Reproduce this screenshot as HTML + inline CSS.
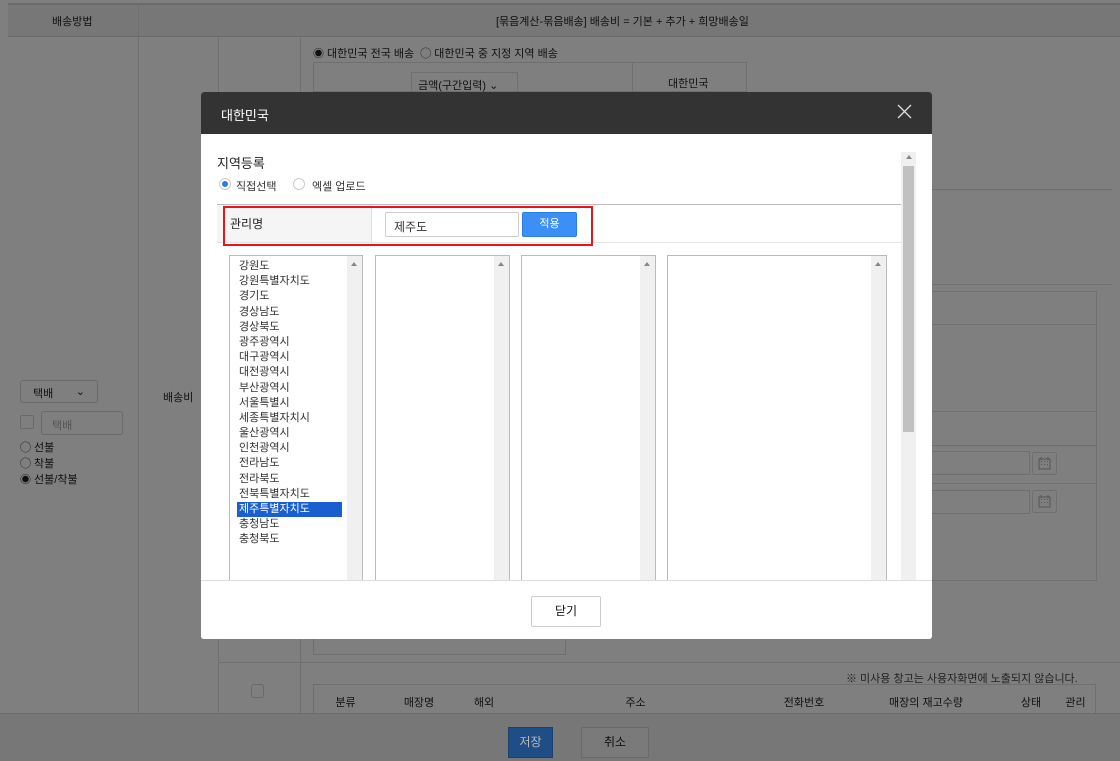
<!DOCTYPE html><html><head><meta charset="utf-8"><style>
*{box-sizing:border-box}body{margin:0;width:1120px;height:761px;overflow:hidden;background:#7f7f7f;font-family:"Liberation Sans","Noto Sans CJK KR",sans-serif;font-size:12px;color:#111;position:relative}
.a{position:absolute}
.hl{position:absolute;height:1px;background:#6f6f6f}.vl{position:absolute;width:1px;background:#6f6f6f}
.list{position:absolute;top:255px;height:330px;border:1px solid #bbb;background:#fff}
.list .sb{position:absolute;right:0;top:0;bottom:0;width:15px;background:#f0f0f0}
.list .sb:after{content:"";position:absolute;left:4px;top:6px;border:3px solid transparent;border-bottom:4px solid #888;border-top:0}
.items div{height:15.2px;line-height:15px;padding-left:2px;font-size:11px;color:#333}
</style></head><body>
<div class="a" style="left:8px;top:3px;width:1112px;height:34px;background:#777;border-top:2px solid #6a6a6a;border-bottom:1px solid #6a6a6a"></div>
<div class="a" style="left:52px;top:13px;font-size:11px">배송방법</div>
<div class="a" style="left:496px;top:13px;font-size:11px">[묶음계산-묶음배송] 배송비 = 기본 + 추가 + 희망배송일</div>
<div class="vl" style="left:138px;top:3px;height:710px"></div>
<div class="vl" style="left:218px;top:37px;height:676px"></div>
<div class="vl" style="left:300px;top:37px;height:676px"></div>
<div class="a" style="left:313px;top:45px;font-size:11px">◉ 대한민국 전국 배송 &nbsp;◯ 대한민국 중 지정 지역 배송</div>
<div class="a" style="left:313px;top:62px;width:434px;height:30px;border:1px solid #6f6f6f"></div>
<div class="vl" style="left:632px;top:62px;height:30px"></div>
<div class="a" style="left:411px;top:72px;width:107px;height:20px;border:1px solid #6f6f6f;font-size:11px;padding:4px 6px">금액(구간입력) ⌄</div>
<div class="a" style="left:668px;top:75px;font-size:11px">대한민국</div>
<div class="hl" style="left:932px;top:189px;width:180px"></div>
<div class="hl" style="left:932px;top:284px;width:180px"></div>
<div class="a" style="left:932px;top:291px;width:165px;height:290px;border:1px solid #6f6f6f;border-left:0"></div>
<div class="hl" style="left:932px;top:324px;width:165px"></div>
<div class="hl" style="left:932px;top:411px;width:165px"></div>
<div class="hl" style="left:932px;top:445px;width:165px"></div>
<div class="hl" style="left:932px;top:483px;width:165px"></div>
<div class="a" style="left:932px;top:451px;width:98px;height:24px;border:1px solid #6f6f6f;border-left:0"></div>
<svg class="a" style="left:1032px;top:452px" width="26" height="24"><rect x=".5" y=".5" width="24" height="22" rx="2" fill="none" stroke="#6f6f6f"/><rect x="7" y="7" width="11" height="10" fill="none" stroke="#555"/><path d="M9 9.5h1M12 9.5h1M15 9.5h1M9 12.5h1M12 12.5h1M15 12.5h1M9 5v3M16 5v3" stroke="#555"/></svg>
<div class="a" style="left:932px;top:490px;width:98px;height:24px;border:1px solid #6f6f6f;border-left:0"></div>
<svg class="a" style="left:1032px;top:490px" width="26" height="24"><rect x=".5" y=".5" width="24" height="22" rx="2" fill="none" stroke="#6f6f6f"/><rect x="7" y="7" width="11" height="10" fill="none" stroke="#555"/><path d="M9 9.5h1M12 9.5h1M15 9.5h1M9 12.5h1M12 12.5h1M15 12.5h1M9 5v3M16 5v3" stroke="#555"/></svg>
<div class="a" style="left:20px;top:380px;width:78px;height:23px;border:1px solid #6a6a6a;border-radius:3px;padding:4px 12px;font-size:11px">택배 <span style="float:right">⌄</span></div>
<div class="a" style="left:20px;top:415px;width:14px;height:14px;border:1px solid #6a6a6a;border-radius:2px"></div>
<div class="a" style="left:41px;top:411px;width:82px;height:24px;border:1px solid #6a6a6a;border-radius:3px;padding:5px 10px;font-size:11px;color:#555">택배</div>
<div class="a" style="left:20px;top:440px;font-size:11px;line-height:16px">◯ 선불<br>◯ 착불<br>◉ 선불/착불</div>
<div class="a" style="left:163px;top:389px;font-size:11px">배송비</div>
<div class="a" style="left:313px;top:620px;width:253px;height:35px;border:1px solid #6f6f6f;border-top:0"></div>
<div class="hl" style="left:218px;top:662px;width:902px"></div>
<div class="a" style="left:846px;top:670px;font-size:11px;color:#222">※ 미사용 창고는 사용자화면에 노출되지 않습니다.</div>
<div class="a" style="left:313px;top:684px;width:783px;height:30px;border:1px solid #6f6f6f"></div>
<div class="a" style="left:313px;top:694px;width:783px;font-size:11px;display:flex"><span style="width:65px;text-align:center">분류</span><span style="width:82px;text-align:center">매장명</span><span style="width:48px;text-align:center">해외</span><span style="width:255px;text-align:center">주소</span><span style="width:82px;text-align:center">전화번호</span><span style="width:162px;text-align:center">매장의 재고수량</span><span style="width:48px;text-align:center">상태</span><span style="width:41px;text-align:center">관리</span></div>
<div class="a" style="left:251px;top:684px;width:13px;height:14px;border:1px solid #6a6a6a;border-radius:3px"></div>
<div class="a" style="left:0;top:713px;width:1120px;height:48px;background:#777;border-top:1px solid #6a6a6a"></div>
<div class="a" style="left:508px;top:727px;width:45px;height:31px;background:#1e4e85;border:1px solid #184070;color:#bbb;text-align:center;line-height:29px;font-size:12px">저장</div>
<div class="a" style="left:581px;top:727px;width:68px;height:31px;background:#7a7a7a;border:1px solid #6a6a6a;text-align:center;line-height:29px;font-size:12px">취소</div>

<div class="a" style="left:201px;top:92px;width:731px;height:547px;background:#fff;border-radius:3px;overflow:hidden">
 <div class="a" style="left:0;top:0;width:731px;height:42px;background:#333;color:#fff;font-size:13px;padding:13px 20px">대한민국</div>
 <svg class="a" style="left:696px;top:12px" width="15" height="15"><path d="M1 1L14 14M14 1L1 14" stroke="#ddd" stroke-width="1.3"/></svg>
 <div class="a" style="left:16px;top:61px;font-size:13px;color:#222">지역등록</div>
 <div class="a" style="left:18px;top:86px;width:12px;height:12px;border:1px solid #ccc;border-radius:50%"><div style="margin:2px;width:6px;height:6px;border-radius:50%;background:#2a7de1"></div></div>
 <div class="a" style="left:35px;top:86px;font-size:11px;color:#333">직접선택</div>
 <div class="a" style="left:92px;top:86px;width:12px;height:12px;border:1px solid #ccc;border-radius:50%"></div>
 <div class="a" style="left:111px;top:86px;font-size:11px;color:#333">엑셀 업로드</div>
 <div class="a" style="left:16px;top:112px;width:684px;height:1px;background:#bbb"></div>
 <div class="a" style="left:16px;top:113px;width:155px;height:38px;background:#f5f5f5;border-right:1px solid #e0e0e0"></div>
 <div class="a" style="left:16px;top:150px;width:684px;height:1px;background:#e5e5e5"></div>
 <div class="a" style="left:22px;top:114px;width:370px;height:40px;border:2px solid #e8141c"></div>
 <div class="a" style="left:29px;top:123px;font-size:12px;color:#222">관리명</div>
 <div class="a" style="left:184px;top:120px;width:134px;height:25px;border:1px solid #ccc;border-radius:2px;padding:5px 8px;font-size:12px;color:#333">제주도</div>
 <div class="a" style="left:321px;top:120px;width:55px;height:25px;background:#3b8ff5;border:1px solid #2a7de1;border-radius:2px;color:#fff;text-align:center;line-height:23px;font-size:11px">적용</div>
 <div class="a" style="left:700px;top:60px;width:15px;height:428px;background:#f0f0f0"><div style="position:absolute;left:2px;top:14px;width:11px;height:266px;background:#c1c1c1"></div></div>
 <div class="a" style="left:705px;top:63px;border:3px solid transparent;border-bottom:4px solid #888;border-top:0"></div>
</div>
<div class="list" style="left:229px;width:134px"><div class="sb"></div><div class="items" style="position:absolute;left:7px;top:3px;width:105px">
<div>강원도</div><div>강원특별자치도</div><div>경기도</div><div>경상남도</div><div>경상북도</div><div>광주광역시</div><div>대구광역시</div><div>대전광역시</div><div>부산광역시</div><div>서울특별시</div><div>세종특별자치시</div><div>울산광역시</div><div>인천광역시</div><div>전라남도</div><div>전라북도</div><div>전북특별자치도</div><div style="background:#1a5fd0;color:#fff">제주특별자치도</div><div>충청남도</div><div>충청북도</div></div></div>
<div class="list" style="left:375px;width:135px"><div class="sb"></div></div>
<div class="list" style="left:521px;width:135px"><div class="sb"></div></div>
<div class="list" style="left:667px;width:220px"><div class="sb"></div></div>
<div class="a" style="left:201px;top:580px;width:731px;height:59px;background:#fff;border-top:1px solid #ddd;border-radius:0 0 3px 3px"></div>
<div class="a" style="left:531px;top:596px;width:70px;height:31px;border:1px solid #ccc;border-radius:2px;background:#fff;text-align:center;line-height:29px;font-size:12px">닫기</div>
</body></html>
